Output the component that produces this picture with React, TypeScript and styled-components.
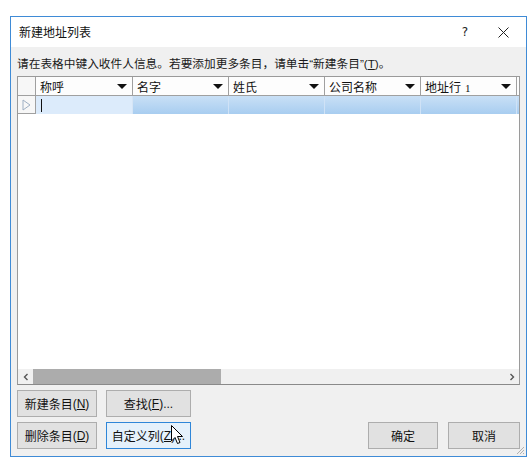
import React from "react";
import styled, { createGlobalStyle } from "styled-components";

const Global = createGlobalStyle`
  html, body { margin: 0; padding: 0; background: #ffffff; }
  body { font-family: "Noto Sans CJK SC", "Noto Sans", sans-serif; font-size: 12px; color: #000; }
`;

const Page = styled.div`
  width: 532px;
  height: 463px;
  padding: 16px 0 0 10px;
  box-sizing: border-box;
`;

const Dialog = styled.div`
  position: relative;
  width: 517px;
  height: 441px;
  box-sizing: border-box;
  border: 1px solid #3f8bd6;
  display: flex;
  flex-direction: column;
  background: #f0f0f0;
`;

const TitleBar = styled.div`
  height: 30px;
  background: #ffffff;
  display: flex;
  align-items: center;
  padding: 0 0 0 8px;
  flex: none;
`;

const Title = styled.div`
  flex: 1;
  font-size: 12px;
  line-height: 16px;
  color: #111;
`;

const TitleButton = styled.div<{ $w: number }>`
  width: ${(p) => p.$w}px;
  height: 30px;
  display: flex;
  align-items: center;
  justify-content: center;
  color: #222;
  font-family: "DejaVu Sans", sans-serif;
  font-size: 12px;
`;

const Body = styled.div`
  flex: 1;
  display: flex;
  flex-direction: column;
  padding: 0 6px 9px 6px;
`;

const Hint = styled.div`
  height: 29px;
  box-sizing: border-box;
  padding-top: 7px;
  font-size: 11.7px;
  line-height: 18px;
  color: #1a1a1a;
  white-space: nowrap;
`;

const Grid = styled.div`
  height: 307px;
  border: 1px solid #9a9a9a;
  border-bottom-color: #8a8a8a;
  background: #fff;
  display: flex;
  flex-direction: column;
  overflow: hidden;
  flex: none;
`;

const Row = styled.div<{ $h: number }>`
  display: flex;
  height: ${(p) => p.$h}px;
  flex: none;
`;

const RowHead = styled.div`
  width: 18px;
  flex: none;
  box-sizing: border-box;
  border-right: 1px solid #a0a0a0;
  border-bottom: 1px solid #a0a0a0;
  background: #f7f7f7;
  display: flex;
  align-items: center;
  justify-content: center;
`;

const HeadCell = styled.div<{ $w: number }>`
  width: ${(p) => p.$w}px;
  flex: none;
  box-sizing: border-box;
  border-right: 1px solid #a0a0a0;
  border-bottom: 1px solid #a0a0a0;
  background: #fdfdfd;
  display: flex;
  align-items: center;
  padding: 0 5px 0 4px;
  font-size: 12px;
  color: #111;
  white-space: nowrap;
  overflow: hidden;
`;

const HeadLabel = styled.span`
  flex: 1;
`;

const Num = styled.span`
  font-family: "Liberation Serif", serif;
  font-size: 11px;
  margin-left: 4px;
`;

const Arrow = styled.span`
  width: 0;
  height: 0;
  border-left: 5px solid transparent;
  border-right: 5px solid transparent;
  border-top: 5px solid #111;
  margin-top: 1px;
`;

const DataCell = styled.div<{ $w: number; $current?: boolean }>`
  width: ${(p) => p.$w}px;
  flex: none;
  box-sizing: border-box;
  border-right: 1px solid ${(p) => (p.$current ? "#d6e5f5" : "#cfe2f6")};
  background: ${(p) =>
    p.$current ? "#dcebfb" : "linear-gradient(#c9e0f6, #a8cdf0)"};
  display: flex;
  align-items: center;
  padding-left: 5px;
`;

const Caret = styled.span`
  width: 1px;
  height: 13px;
  background: #111;
`;

const Empty = styled.div`
  flex: 1;
  background: #fff;
`;

const HScroll = styled.div`
  height: 15px;
  flex: none;
  background: #f0f0f0;
  display: flex;
  align-items: stretch;
`;

const ScrollBtn = styled.div`
  width: 15px;
  flex: none;
  display: flex;
  align-items: center;
  justify-content: center;
`;

const Track = styled.div`
  flex: 1;
  display: flex;
  align-items: stretch;
`;

const Thumb = styled.div`
  width: 188px;
  background: #acacac;
`;

const Footer = styled.div`
  margin-top: 5px;
  display: flex;
  align-items: flex-end;
`;

const LeftButtons = styled.div`
  display: grid;
  grid-template-columns: 80px 85px;
  column-gap: 9px;
  row-gap: 5px;
`;

const RightButtons = styled.div`
  margin-left: auto;
  display: flex;
  gap: 10px;
`;

const Button = styled.div<{ $w?: number; $focus?: boolean }>`
  position: relative;
  width: ${(p) => p.$w ?? 80}px;
  height: 27px;
  box-sizing: border-box;
  border: 1px solid ${(p) => (p.$focus ? "#2f86d8" : "#adadad")};
  background: ${(p) => (p.$focus ? "#e5f1fb" : "#e1e1e1")};
  display: flex;
  align-items: center;
  justify-content: center;
  font-size: 12px;
  color: #111;
  white-space: nowrap;
`;

const U = styled.span`
  text-decoration: underline;
  font-family: "Liberation Sans", sans-serif;
`;

const Latin = styled.span`
  font-family: "Liberation Sans", sans-serif;
`;

const Cursor = styled.svg`
  position: absolute;
  left: 64px;
  top: 2px;
`;

const Grip = styled.svg`
  position: absolute;
  right: 1px;
  bottom: 1px;
`;

const cols: { label: string; w: number; num?: string }[] = [
  { label: "称呼", w: 97 },
  { label: "名字", w: 96 },
  { label: "姓氏", w: 96 },
  { label: "公司名称", w: 96 },
  { label: "地址行", w: 96, num: "1" },
  { label: "", w: 20 },
];

export default function App() {
  return (
    <Page>
      <Global />
      <Dialog>
        <TitleBar>
          <Title>新建地址列表</Title>
          <TitleButton $w={30}>?</TitleButton>
          <TitleButton $w={46}>
            <svg width="11" height="11" viewBox="0 0 11 11">
              <path d="M0.5 0.5 L10.5 10.5 M10.5 0.5 L0.5 10.5" stroke="#222" strokeWidth="1" />
            </svg>
          </TitleButton>
        </TitleBar>
        <Body>
          <Hint>
            请在表格中键入收件人信息。若要添加更多条目，请单击<Latin>“</Latin>新建条目
            <Latin>”(</Latin>
            <U>T</U>
            <Latin>)</Latin>。
          </Hint>
          <Grid>
            <Row $h={19}>
              <RowHead />
              {cols.map((c, i) => (
                <HeadCell key={i} $w={c.w}>
                  <HeadLabel>
                    {c.label}
                    {c.num && <Num>{c.num}</Num>}
                  </HeadLabel>
                  {c.label && <Arrow />}
                </HeadCell>
              ))}
            </Row>
            <Row $h={18}>
              <RowHead>
                <svg width="9" height="12" viewBox="0 0 9 12">
                  <path d="M1 1 L8 6 L1 11 Z" fill="none" stroke="#9fb0c4" strokeWidth="1" />
                </svg>
              </RowHead>
              {cols.map((c, i) => (
                <DataCell key={i} $w={c.w} $current={i === 0}>
                  {i === 0 && <Caret />}
                </DataCell>
              ))}
            </Row>
            <Empty />
            <HScroll>
              <ScrollBtn>
                <svg width="6" height="8" viewBox="0 0 6 8">
                  <path d="M4.5 1 L1.5 4 L4.5 7" fill="none" stroke="#555" strokeWidth="1.4" />
                </svg>
              </ScrollBtn>
              <Track>
                <Thumb />
              </Track>
              <ScrollBtn>
                <svg width="6" height="8" viewBox="0 0 6 8">
                  <path d="M1.5 1 L4.5 4 L1.5 7" fill="none" stroke="#555" strokeWidth="1.4" />
                </svg>
              </ScrollBtn>
            </HScroll>
          </Grid>
          <Footer>
            <LeftButtons>
              <Button>
                新建条目<Latin>(</Latin><U>N</U><Latin>)</Latin>
              </Button>
              <Button $w={85}>
                查找<Latin>(</Latin><U>F</U><Latin>)...</Latin>
              </Button>
              <Button>
                删除条目<Latin>(</Latin><U>D</U><Latin>)</Latin>
              </Button>
              <Button $w={85} $focus>
                自定义列<Latin>(</Latin><U>Z</U><Latin>)...</Latin>
                <Cursor width="13" height="20" viewBox="0 0 13 20">
                  <path
                    d="M0.5 0.5 L0.5 16 L4 12.5 L6.5 18.5 L9 17.5 L6.5 11.5 L11.5 11.5 Z"
                    fill="#fff"
                    stroke="#000"
                    strokeWidth="1"
                    strokeLinejoin="round"
                  />
                </Cursor>
              </Button>
            </LeftButtons>
            <RightButtons>
              <Button $w={70}>确定</Button>
              <Button $w={72}>取消</Button>
            </RightButtons>
          </Footer>
        </Body>
        <Grip width="10" height="10" viewBox="0 0 10 10">
          <path d="M9 2 L2 9 M9 5 L5 9 M9 8 L8 9" stroke="#b0b0b0" strokeWidth="1" />
        </Grip>
      </Dialog>
    </Page>
  );
}
